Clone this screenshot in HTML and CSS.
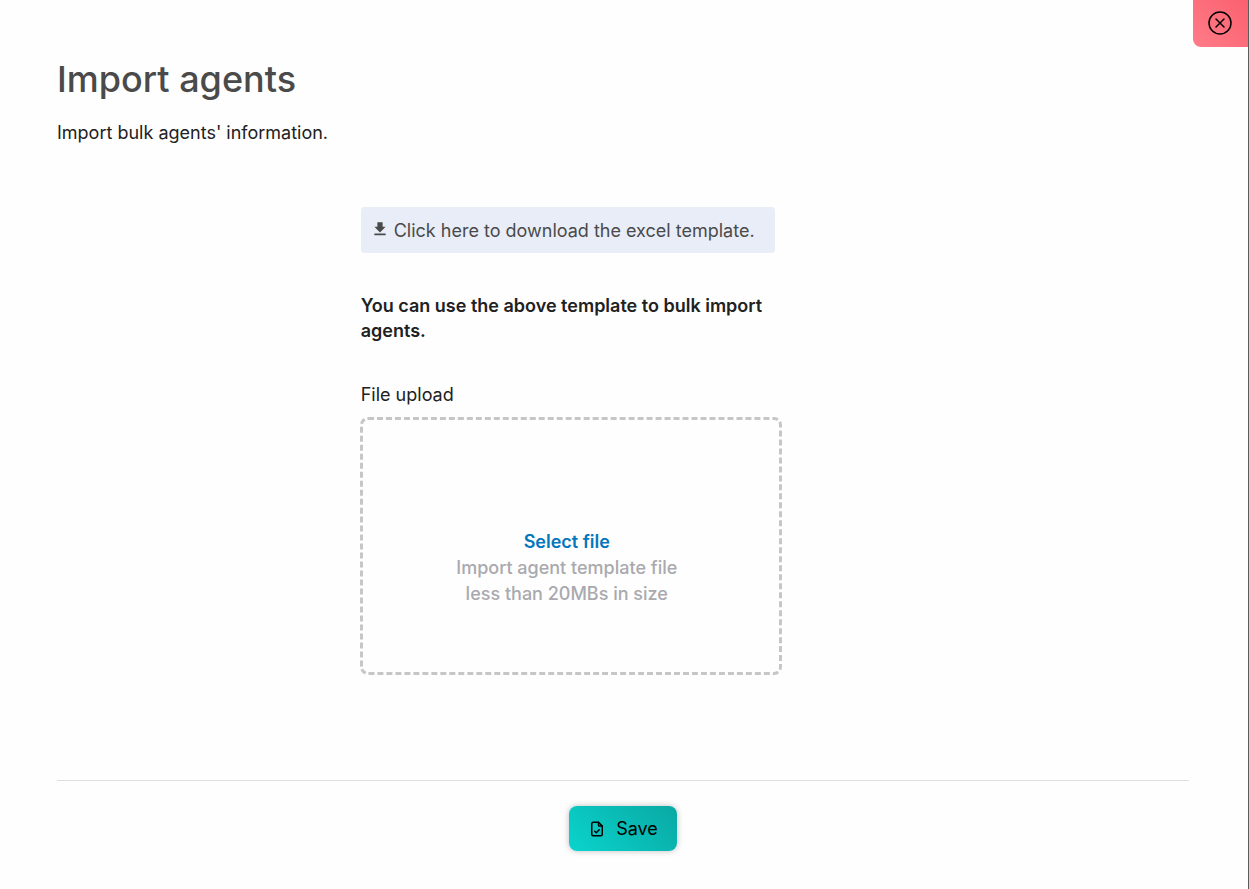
FILE: index.html
```html
<!DOCTYPE html>
<html lang="en">
<head>
    <meta charset="UTF-8">
    <meta name="viewport" content="width=device-width, initial-scale=1.0">
    <title>Import agents</title>
    <link rel="stylesheet" href="styles.css">
</head>
<body>
    <main class="panel">
        <button type="button" class="close" aria-label="Close">
            <svg width="26" height="26" viewBox="0 0 26 26" fill="none" stroke="#000" stroke-linecap="round">
                <circle cx="13" cy="13" r="11" stroke-width="1.5"/>
                <path d="M9 9l8 8M17 9l-8 8" stroke-width="1.5"/>
            </svg>
        </button>
        <header class="header">
            <h1>Import agents</h1>
            <p>Import bulk agents' information.</p>
        </header>
        <form>
            <div class="columns">
                <div class="content">
                    <a href="#" class="download">
                        <svg width="18" height="18" viewBox="0 0 24 24" fill="#4a4a4a">
                            <path d="M19.5 9H15.500V3h-7v6H4.500L12 16.500 19.500 9zM4.500 18v2.300h15V18h-15z"/>
                        </svg>
                        Click here to download the excel template.
                    </a>
                    <p class="note">You can use the above template to bulk import agents.</p>
                    <label for="file" class="label">File upload</label>
                    <label for="file" class="dropzone">
                        <span class="select">Select file</span>
                        <span>Import agent template file</span>
                        <span>less than 20MBs in size</span>
                    </label>
                    <input type="file" id="file" class="file-input">
                </div>
            </div>
            <footer class="footer">
                <button type="submit" class="save">
                    <svg width="18" height="18" viewBox="0 0 24 24" fill="none" stroke="#000" stroke-width="2" stroke-linecap="round" stroke-linejoin="round">
                        <path d="M14 3v4a1 1 0 0 0 1 1h4"/>
                        <path d="M17 21H7a2 2 0 0 1-2-2V5a2 2 0 0 1 2-2h7l5 5v11a2 2 0 0 1-2 2z"/>
                        <path d="M9 15l2 2 4-4"/>
                    </svg>
                    Save
                </button>
            </footer>
        </form>
    </main>
</body>
</html>
```
FILE: styles.css
```css
* {
    box-sizing: border-box;
}
body {
    margin: 0;
    background-color: #fefefe;
    color: #212121;
    font-family: Inter, sans-serif;
    font-size: 18px;
    line-height: 26px;
}
h1, p {
    margin: 0;
}
.panel {
    position: relative;
    min-height: 100vh;
    padding: 55px 59px 38px 57px;
    border-right: 1px solid #5c5c5f;
}
.close {
    position: absolute;
    top: 0;
    right: 0;
    display: flex;
    align-items: center;
    justify-content: center;
    width: 55px;
    height: 47px;
    padding: 0 2px 2px 0;
    border: none;
    border-radius: 0 0 0 8px;
    background: linear-gradient(45deg, #ff7c88, #fb606f);
    cursor: pointer;
}
.header h1 {
    margin-bottom: 17px;
    color: #4a4a4a;
    font-size: 36px;
    font-weight: 500;
    line-height: 48px;
}
.columns {
    display: grid;
    grid-template-columns: 11fr 15fr 15fr;
    margin-top: 61px;
}
.content {
    grid-column: 2;
    display: flex;
    flex-direction: column;
}
.download {
    display: flex;
    align-items: center;
    gap: 5px;
    padding: 11px 10px 9px;
    border-radius: 4px;
    background-color: #e9edf8;
    color: #4a4a4a;
    text-decoration: none;
    white-space: nowrap;
}
.download svg {
    margin-bottom: 4px;
}
.note {
    margin: 40px 0 39px;
    font-weight: 600;
    line-height: 25px;
}
.label {
    margin-bottom: 9px;
}
.dropzone {
    display: flex;
    flex-direction: column;
    align-items: center;
    min-height: 258px;
    margin: 0 -7px 0 -1px;
    padding: 109px 8px 0 0;
    border: 3px dashed #c6c6c9;
    border-radius: 8px;
    color: #a9a9ae;
    font-weight: 500;
    cursor: pointer;
}
.select {
    color: #0277bd;
    font-weight: 600;
}
.file-input {
    position: absolute;
    opacity: 0;
    pointer-events: none;
}
.footer {
    display: flex;
    justify-content: center;
    margin-top: 105px;
    padding-top: 25px;
    border-top: 1px solid #dedede;
}
.save {
    display: flex;
    align-items: center;
    gap: 10px;
    height: 45px;
    padding: 1px 19px 0;
    border: none;
    border-radius: 8px;
    background: linear-gradient(45deg, #0ad4cd, #0aa8a3);
    box-shadow: 0 0 6px rgba(0, 0, 0, 0.25);
    color: #000;
    font: inherit;
    cursor: pointer;
}
```
